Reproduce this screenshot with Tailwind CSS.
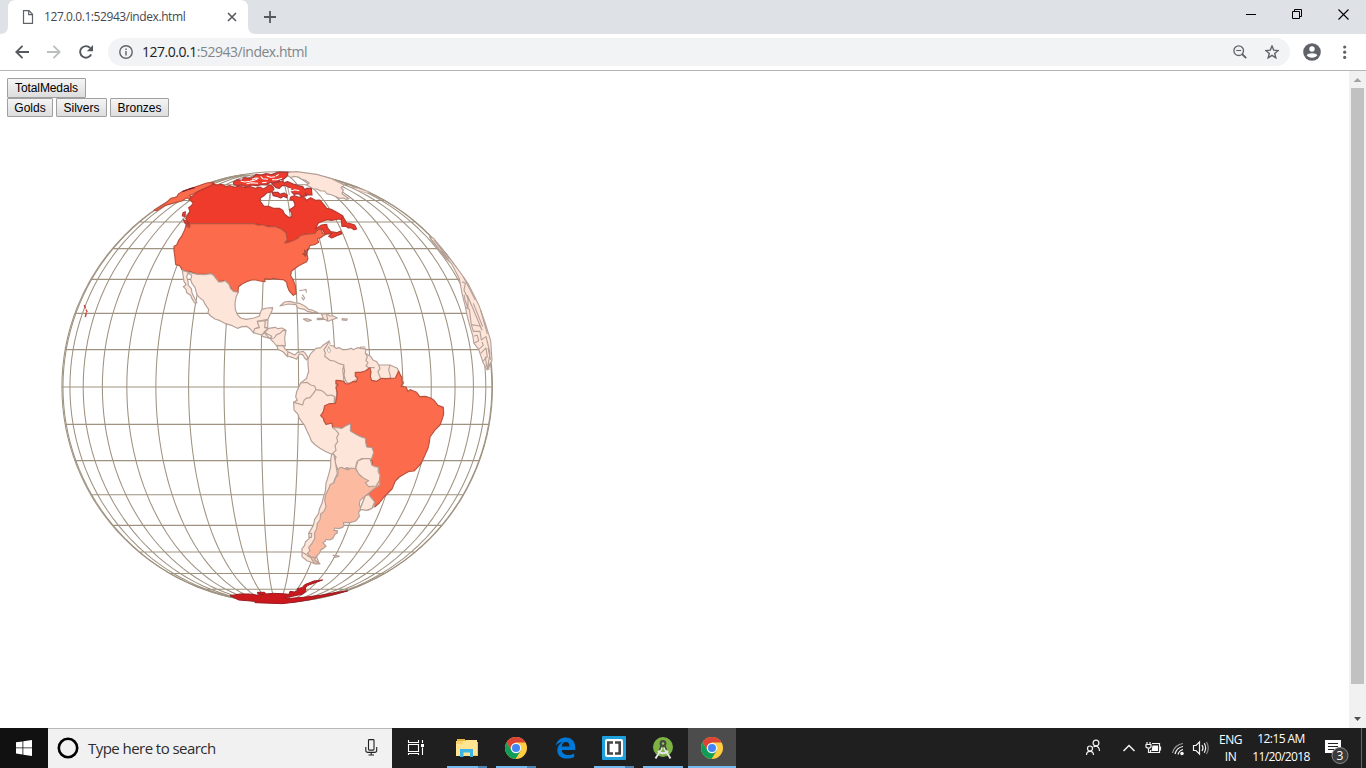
<!DOCTYPE html>
<html lang="en">
<head>
<meta charset="utf-8">
<title>127.0.0.1:52943/index.html</title>
<script src="https://cdn.jsdelivr.net/npm/@tailwindcss/browser@4"></script>
</head>
<body class="w-[1366px] h-[768px] overflow-hidden bg-white flex flex-col font-['Open_Sans',sans-serif]">

<!-- Tab strip -->
<header class="h-[34px] shrink-0 bg-[#dee1e6] flex">
  <svg class="w-[256px] h-[34px] shrink-0 absolute" viewBox="0 0 256 34"><path d="M0 34Q8 34 8 26V8Q8 0 16 0H240Q248 0 248 8V26Q248 34 256 34Z" fill="#fff"/></svg>
  <div class="relative w-[248px] h-[34px] flex items-center">
    <svg class="ml-[22px] w-[12px] h-[14px]" viewBox="0 0 12 14" fill="none" stroke="#5f6368" stroke-width="1.2"><path d="M1.5 .7H7L10.5 4.3V13.3H1.5ZM6.7 .8V4.6H10.4"/></svg>
    <span class="ml-[10px] w-[180px] text-[12px] leading-[16px] tracking-[-0.42px] text-[#45494d] whitespace-nowrap">127.0.0.1:52943/index.html</span>
    <svg class="w-[10px] h-[10px] shrink-0 ml-[3px]" viewBox="0 0 10 10" stroke="#55595e" stroke-width="1.6"><path d="M1 1L9 9M9 1L1 9"/></svg>
  </div>
  <svg class="ml-[16px] mt-[11px] w-[12px] h-[12px]" viewBox="0 0 12 12" stroke="#55595e" stroke-width="1.8"><path d="M6 0V12M0 6H12"/></svg>
  <div class="ml-auto flex mt-[9px] pr-[17px] gap-[36px]">
    <svg class="w-[10px] h-[11px]" viewBox="0 0 10 11" stroke="#000"><path d="M0 5.5H10"/></svg>
    <svg class="w-[10px] h-[11px]" viewBox="0 0 10 11" stroke="#000" fill="none"><path d="M.5 2.5H7.5V9.5H.5ZM2.5 2.5V.5H9.5V7.5H7.5"/></svg>
    <svg class="w-[11px] h-[11px]" viewBox="0 0 11 11" stroke="#000" stroke-width="1.1"><path d="M.5 .5L10.5 10.5M10.5 .5L.5 10.5"/></svg>
  </div>
</header>

<!-- Toolbar -->
<nav class="h-[37px] shrink-0 flex items-center bg-white border-b border-[#b5b5b5]">
  <svg class="ml-[15px] w-[14px] h-[14px]" viewBox="0 0 14 14" fill="none" stroke="#55595e" stroke-width="1.8"><path d="M14 7H1.5M7.5 .8L1.3 7L7.5 13.2"/></svg>
  <svg class="ml-[18px] w-[14px] h-[14px]" viewBox="0 0 14 14" fill="none" stroke="#bbbdbf" stroke-width="1.8"><path d="M0 7H12.5M6.5 .8L12.7 7L6.5 13.2"/></svg>
  <svg class="ml-[18px] w-[14px] h-[14px]" viewBox="0 0 14 14" fill="none"><path d="M12.2 9.4A5.8 5.8 0 1 1 11.2 2.9" stroke="#55595e" stroke-width="1.9"/><path d="M14 0V6.2H7.8Z" fill="#55595e"/></svg>
  <div class="ml-[15px] w-[1182px] h-[28px] rounded-full bg-[#f1f3f4] flex items-center">
    <svg class="ml-[11px] w-[14px] h-[14px]" viewBox="0 0 14 14" fill="none" stroke="#5f6368" stroke-width="1.4"><circle cx="7" cy="7" r="6.2"/><path d="M7 6V10.5M7 3.4V4.9"/></svg>
    <span class="ml-[9px] text-[14px] leading-[20px] tracking-[-0.48px] text-[#80868b] whitespace-nowrap"><span class="text-[#202124]">127.0.0.1</span>:52943/index.html</span>
    <svg class="ml-auto w-[14px] h-[14px]" viewBox="0 0 14 14" fill="none" stroke="#5f6368"><circle cx="5.7" cy="5.7" r="4.8" stroke-width="1.3"/><path d="M3.2 5.5H8.2" stroke-width="1.1"/><path d="M9 9L13.2 13.2" stroke-width="1.8"/></svg>
    <svg class="ml-[18px] mr-[11px] w-[14px] h-[14px]" viewBox="0 0 14 14" fill="none" stroke="#5f6368" stroke-width="1.4"><path d="M7 1L8.700 5.100L13.100 5.500L9.700 8.400L10.800 12.800L7 10.400L3.200 12.800L4.300 8.400L.9 5.500L5.300 5.100Z"/></svg>
  </div>
  <svg class="ml-[13px] w-[18px] h-[18px]" viewBox="0 0 18 18"><circle cx="9" cy="9" r="8.8" fill="#5f6368"/><circle cx="9" cy="6" r="2.7" fill="#fff"/><path d="M3.7 12.3C4.5 9.6 13.5 9.6 14.3 12.3C12.5 15.6 5.5 15.6 3.7 12.3Z" fill="#fff"/></svg>
  <svg class="ml-[22px] w-[4px] h-[14px]" viewBox="0 0 4 14" fill="#5f6368"><circle cx="1.700" cy="2" r="1.600"/><circle cx="1.700" cy="7.200" r="1.600"/><circle cx="1.700" cy="12.400" r="1.600"/></svg>
</nav>

<!-- Page -->
<main class="h-[657px] shrink-0 flex bg-white">
  <div class="grow pl-[7px] pt-[7px]">
    <div class="flex font-['Liberation_Sans',Arial,sans-serif] text-[12px] leading-[18px] text-black">
      <button class="w-[79px] h-[20px] border border-[#a0a0a0] rounded-[1px] bg-linear-to-b from-[#f5f5f5] to-[#dddddd] tracking-[-0.1px]">TotalMedals</button>
    </div>
    <div class="flex gap-[3px] font-['Liberation_Sans',Arial,sans-serif] text-[12px] leading-[16px] text-black">
      <button class="w-[46px] h-[19px] border border-[#a0a0a0] rounded-[1px] bg-linear-to-b from-[#f5f5f5] to-[#dddddd]">Golds</button>
      <button class="w-[51px] h-[19px] border border-[#a0a0a0] rounded-[1px] bg-linear-to-b from-[#f5f5f5] to-[#dddddd]">Silvers</button>
      <button class="w-[59px] h-[19px] border border-[#a0a0a0] rounded-[1px] bg-linear-to-b from-[#f5f5f5] to-[#dddddd]">Bronzes</button>
    </div>
    <svg class="block ml-[50px] mt-[50px] w-[440px] h-[440px]" viewBox="57 167 440 440" fill="none" stroke-linejoin="round">
      <g id="graticule" stroke="#9f9280" stroke-width="1.050"></g>

      <!-- North America -->
      <g transform="translate(150 165) scale(.33333)" stroke="#b5a097" stroke-width="3.500">
        <path fill="#fee5d9" d="M410 22L440 20L500 28L545 41L583 60L573 68L580 75L576 86L597 101L588 103L580 99L568 100L560 96L546 90L530 86L524 78L512 78L500 72L490 72L480 66L470 60L478 54L466 46L454 42L445 36L430 34L424 38L414 32Z"/>
        <path fill="#fee5d9" stroke-width="2" d="M606 66L625 70L660 82L650 84L622 76Z"/>
        <path fill="#fc6b4b" stroke="#b9523f" d="M192 52L170 54L133 67L100 78L86 86L80 96L62 100L50 112L12 136L20 137L44 122L65 116L78 112L96 108L104 102L112 98L120 104L128 98L118 92L140 82L160 72L192 61Z"/>
        <path stroke="#7c1f2c" stroke-width="4" d="M97 80L118 72L134 68"/>
        <path fill="#ef3b2c" stroke="#b63a30" d="M186 56L200 60L215 58L228 65L240 62L252 67L270 63L284 68L300 65L316 70L330 66L340 72L350 66L356 60L368 64L372 72L366 80L350 84L342 92L332 98L330 108L342 124L356 124L370 130L388 130L398 136L404 148L412 154L418 158L426 155L425 144L418 134L426 130L434 124L435 118L430 106L420 104L422 96L434 92L446 97L458 94L470 106L482 98L496 106L510 105L524 122L530 130L546 134L560 142L578 152L581 166L566 162L545 166L532 164L520 168L505 174L496 192L515 180L530 178L532 188L542 200L560 203L572 198L576 206L560 212L552 216L545 219L536 214L546 206L525 207L517 193L500 197L496 205L465 208L444 220L428 227L404 234L412 225L408 203L395 193L378 185L340 182L312 176L116 176L107 160L120 140L116 128L124 122L130 114L118 104L122 98L140 82L160 72L186 60Z"/>
        <path fill="#ef3b2c" stroke="#b63a30" d="M578 154L574 164L576 184L588 184L595 189L604 188L612 194L620 192L614 180L600 176L590 174L584 164Z"/>
        <path fill="#ef3b2c" stroke="#b63a30" d="M100 164L114 170L122 180L119 188L106 176ZM99 143L106 140L105 154L97 153Z"/>
        <path fill="#ef3b2c" stroke="#a6373a" d="M250 52L262 44L275 46L282 38L300 40L310 36L318 28L334 30L348 26L364 29L376 25L388 21L414 22L411 34L398 44L384 42L390 50L374 54L362 52L348 60L336 58L320 62L305 60L290 66L276 60L262 62L252 58ZM366 56L384 50L398 48L402 54L412 50L430 57L444 62L458 65L464 74L470 70L484 70L486 90L474 90L466 84L470 92L455 94L445 86L432 88L424 80L430 76L418 68L408 62L396 62L388 70L378 68ZM366 82L384 82L390 88L402 84L412 91L410 98L400 94L392 99L380 94L370 92Z"/>
        <path stroke="#fff" stroke-width="3.200" d="M272 48L284 51L300 49L322 43M290 56L304 53L324 55M332 34L338 41L354 43M350 33L362 37L376 35M366 44L380 44L396 40M424 78L434 74L448 77M336 53L350 52M306 43L318 39L326 40M386 28L378 33M410 70L424 71"/>
        <path stroke="#b5a097" stroke-width="3" d="M413 66L418 90M362 84L360 104"/>
        <path fill="#fc6b4b" stroke="#b9523f" d="M116 176L312 176L322 180L340 180L354 185L378 185L395 193L408 203L410 214L412 225L404 234L416 232L428 227L444 220L450 212L465 208L496 205L500 197L512 191L518 205L529 208L520 212L512 218L502 222L506 232L496 238L490 240L480 241L475 254L468 258L471 270L474 280L470 290L446 302L430 314L424 320L422 332L430 346L436 362L438 386L430 391L418 378L412 364L410 352L400 344L385 343L372 340L358 343L344 341L345 350L330 348L318 345L305 345L290 350L276 357L265 366L264 382L248 378L237 358L225 347L212 348L206 352L198 346L196 338L184 325L164 328L142 327L120 320L97 316L90 303L77 298L75 278L72 258L72 244L80 240L86 226L94 215L104 195L108 181L118 188L120 182Z"/>
        <path stroke="#9c4437" stroke-width="3.500" d="M464 254L466 275M457 265L467 272M473 251L470 271M109 174L120 178"/>
      </g>

      <!-- Mexico, Central America and the Caribbean -->
      <g transform="translate(160 260) scale(.33333)" stroke="#b5a097" stroke-width="3.500">
        <path fill="#fee5d9" d="M67 31L90 38L112 43L134 44L154 41L162 47L166 53L176 66L186 66L195 62L207 73L212 86L220 94L235 97L228 112L225 130L226 148L232 164L242 174L258 178L282 174L298 168L302 156L305 148L322 144L338 143L336 152L330 164L324 178L292 184L298 203L290 204L280 218L270 206L260 199L246 200L232 205L214 196L197 191L180 182L165 177L152 168L144 159L146 148L136 134L130 122L118 112L112 106L108 94L105 82L96 70L92 60L95 46L84 40L80 50L84 64L85 76L94 86L96 98L102 112L111 128L104 129L96 116L92 106L80 98L78 88L70 80L78 74L72 64L70 52Z"/>
        <path fill="#fee5d9" d="M292 184L316 182L314 203L326 205L312 220L304 225L280 218L284 206L298 203ZM316 182L324 180L323 202L314 203ZM304 225L312 218L330 235L308 229ZM312 216L326 205L345 202L354 206L366 204L378 211L374 234L376 258L366 256L350 258L340 246L330 236L335 229ZM330 236L342 234L350 224L360 220L368 212L378 211M350 256L370 258L376 268L384 275L382 290L370 276L354 268ZM384 275L394 280L404 285L412 278L420 276L430 274L436 280L444 292L440 300L434 294L428 284L418 282L414 290L410 298L396 292L382 288Z"/>
        <path fill="#fee5d9" d="M360 138L374 126L390 124L402 128L418 130L434 138L446 148L456 150L474 158L458 158L442 154L432 148L414 144L408 134L385 132ZM484 161L502 162L510 168L520 168L532 174L516 179L504 184L494 178L472 179L472 175L490 175ZM500 164L503 182M430 177L442 176L454 181L441 184ZM547 176L562 177L560 181L546 180Z"/>
        <path d="M418 92L430 90L438 88L439 98M427 104L434 114L430 120L425 111"/>
      </g>

      <!-- South America -->
      <g transform="translate(280 335) scale(.33333)" stroke="#b5a097" stroke-width="3.500">
        <path fill="#fee5d9" d="M84 72L92 56L108 40L122 38L130 30L148 18L150 26L146 30L160 33L168 40L178 38L188 44L200 44L214 40L220 44L232 38L258 42L256 54L264 60L272 64L278 74L290 80L296 90L330 90L352 100L370 145L300 220L240 400L165 400L155 358L138 350L120 340L106 330L94 318L88 302L82 290L74 272L58 250L54 238L42 225L41 202L52 196L50 178L62 144L80 130L82 120L86 110L84 90Z"/>
        <path fill="#fee5d9" d="M62 144L82 142L92 150L104 153L108 164L98 178L90 188L78 190L72 196L68 210L52 205L41 202L52 196L47 186L50 170ZM108 164L122 166L130 170L142 182L156 180L164 186L162 204M164 202L170 180L168 138L180 138L192 144L190 120L188 104L192 90L178 86L162 78L150 76L134 64L136 54L132 44L140 32L148 18M190 88L194 108L192 120L196 134L200 142L210 146L228 134M256 54L262 66L258 76L264 84L258 92L266 98M272 112L270 98L284 98M296 90L300 100L294 110L302 132M330 90L326 104L330 118L332 132M258 42L240 40L242 36L256 36"/>
        <path fill="#fff" stroke-width="2.500" d="M146 35L152 48L148 53L142 48Z"/>
        <path fill="#fc6b4b" stroke="#b9523f" d="M168 136L180 137L192 140L196 146L206 147L218 140L230 140L232 128L226 124L226 112L242 112L256 108L269 98L273 110L271 124L275 136L290 139L304 130L318 131L346 129L356 108L360 118L366 128L365 138L370 142L363 154L378 156L384 170L390 164L410 172L419 185L436 184L452 189L462 196L474 211L490 217L491 238L486 254L480 270L464 286L450 306L448 322L444 340L434 362L424 384L412 398L402 408L388 409L374 416L358 426L346 438L336 462L312 486L298 504L284 516L274 496L258 482L280 462L297 450L297 438L294 426L298 416L296 402L286 403L275 398L277 382L273 372L276 362L281 350L276 338L260 336L257 322L257 310L244 306L230 299L211 288L212 266L198 272L186 280L172 278L158 278L156 264L138 268L132 258L130 250L122 242L130 230L134 212L148 206L166 205L170 190L172 174L168 158L174 148L168 146Z"/>
        <path fill="#fee5d9" d="M158 278L172 278L186 280L198 272L212 266L211 288L230 299L244 306L257 310L257 322L260 336L276 338L281 352L274 373L244 371L230 384L226 402L214 402L200 398L188 404L174 404L168 390L164 378L168 366L158 355L168 346L165 332L173 320L170 308L176 296L168 286ZM230 382L244 371L270 373L275 398L297 404L299 440L290 452L268 454L264 442L228 406ZM256 482L268 486L276 492L280 500L283 514L266 525L240 521Z"/>
      </g>
      <!-- Southern cone, Falklands and Antarctica -->
      <g transform="translate(220 450) scale(.33333)" stroke="#b5a097" stroke-width="3.500">
        <path fill="#fee5d9" d="M335 12L332 30L332 50L326 74L318 100L316 124L310 142L306 160L298 178L296 190L284 208L280 226L273 238L266 250L268 265L256 276L254 286L246 296L246 320L262 333L272 336L285 342L298 342L290 322L296 290L306 240L320 170L328 130L352 70L342 14Z"/>
        <path fill="#fcbba1" d="M354 60L358 54L364 52L374 56L384 60L392 54L407 56L412 64L420 68L436 82L448 93L444 102L460 107L478 94L480 104L460 118L438 136L428 144L420 152L418 164L424 178L416 186L418 200L407 213L390 218L370 218L372 226L368 232L356 236L344 234L342 242L352 242L352 248L344 254L338 266L328 270L318 268L316 274L308 278L318 288L310 296L304 298L298 310L288 320L284 330L300 341L282 339L272 322L262 310L270 302L266 292L276 280L284 266L284 248L290 236L292 220L300 210L302 192L312 184L318 170L314 150L318 132L328 112L330 104L342 98L346 84L354 76Z"/>
        <path fill="#fee5d9" d="M407 54L414 32L430 26L450 26L456 46L466 50L476 52L474 64L480 76L478 92L468 108L446 110L436 98L446 92L430 84L416 72ZM436 137L446 134L464 156L456 175L440 181L420 178Z"/>
        <path d="M266 250L275 250L274 262L266 262M246 306L256 312L266 320L282 322L286 326M338 316L350 317L358 319L340 323"/>
        <path fill="#cb181d" stroke="#9b1c22" stroke-width="3" d="M30 437L60 432L88 432L110 435L130 434L114 432L112 427L134 427L138 432L160 430L186 431L207 433L210 424L224 426L232 422L232 416L246 413L254 404L282 393L308 390L294 395L264 406L256 414L258 424L248 432L222 438L194 443L212 445L250 442L300 436L350 427L383 423L340 434L270 449L230 456L186 461L105 458L104 454L56 450Z"/>
      </g>

      <!-- Western Africa and Iberia along the limb -->
      <g transform="translate(400 220) scale(.33333)" stroke="#b5a097" stroke-width="3.300">
        <path fill="#fee5d9" d="M88 50L100 54L126 88L156 124L180 156L206 194L236 254L256 310L272 362L276 420L262 450L250 430L236 388L222 370L218 346L210 320L202 290L196 260L186 220L178 176L154 130L134 112L108 80Z"/>
        <path d="M102 60L142 112M92 56L116 86L146 118M120 94L150 126M186 185L196 190L192 210L204 236L204 264L195 240L192 224M196 262L208 268L214 314L240 318L246 330L202 226M220 250L248 320M242 270L262 342M190 170L226 240M214 314L220 334L240 334L244 360L258 350L262 366M222 348L232 346L236 362L222 370M236 388L250 376L246 366M242 400L258 384L262 410L248 424M262 366L270 400L262 446M264 384L272 420M268 430L266 450M256 410L260 440"/>
      </g>

      <!-- Hawaii -->
      <path stroke="#c94b3c" stroke-width="1.500" d="M84.300 305L85.500 308.500M86 309.500L87.200 312M86.500 312.500L85.300 317"/>
    </svg>
  </div>
  <!-- Scrollbar -->
  <div class="w-[17px] bg-[#f1f1f1] flex flex-col items-center">
    <svg class="h-[17px] w-[17px]" viewBox="0 0 17 17" fill="#a3a3a3"><path d="M4.5 11L8.5 7L12.5 11Z"/></svg>
    <div class="w-[13px] h-[596px] bg-[#c1c1c1]"></div>
    <svg class="mt-auto h-[17px] w-[17px]" viewBox="0 0 17 17" fill="#505050"><path d="M5 6H12L8.5 10Z"/></svg>
  </div>
</main>

<!-- Taskbar -->
<footer class="h-[40px] shrink-0 bg-[#1f1f1f] flex">
  <div class="w-[48px] bg-[#111] flex items-center justify-center">
    <svg class="w-[16px] h-[16px]" viewBox="0 0 16 16" fill="#fff"><path d="M0 2.3L6.5 1.4V7.5H0ZM7.3 1.3L16 0V7.5H7.3ZM0 8.3H6.5V14.5L0 13.6ZM7.3 8.3H16V16L7.3 14.7Z"/></svg>
  </div>
  <div class="w-[344px] bg-[#f1f1f1] border-t border-[#b8b8b8] flex items-center">
    <svg class="ml-[9px] mb-[2px] w-[22px] h-[22px]" viewBox="0 0 22 22"><circle cx="11" cy="11" r="9.2" fill="none" stroke="#000" stroke-width="2.6"/></svg>
    <span class="ml-[9px] mb-[2px] text-[15px] leading-[20px] tracking-[-0.55px] text-[#2d2d2d] whitespace-nowrap">Type here to search</span>
    <svg class="ml-auto mr-[14px] mb-[2px] w-[13px] h-[17px]" viewBox="0 0 13 17" fill="none" stroke="#222" stroke-width="1.1"><rect x="3.5" y=".6" width="5.500" height="10.5" rx=".8"/><path d="M.8 8V11.5Q.8 13.4 3 13.4H9.500Q11.700 13.4 11.700 11.5V8M6.200 13.4V16M3.500 16H9"/></svg>
  </div>
  <svg class="w-[348px] h-[40px]" viewBox="392 728 348 40">
    <rect x="688" y="728" width="48" height="40" fill="#4c4c4c"/>
    <g fill="#76b9ed"><path d="M447 766H478V768H447ZM496 766H527V768H496ZM594 766H625V768H594ZM643 766H683V768H643ZM688 766H736V768H688Z"/></g>
    <path fill="#4d84b4" d="M478 766H487V768H478ZM527 766H536V768H527ZM625 766H634V768H625Z"/>
    <g fill="none" stroke="#fff" stroke-width="1.1"><path d="M408.5 744.5H418.5V751.5H408.5ZM408.5 740V742.5H418.5V740M408.5 755V753.5H418.5V755M422.5 740V743M422.5 747.5V755"/></g><path fill="#fff" d="M421 744H424V747H421Z"/>
    <!-- File Explorer -->
    <path fill="#e8b63e" d="M457 739H465V743H457Z"/><path fill="#ffe591" d="M456 741H464L466 740H477V756H456Z"/><path fill="#f7d470" d="M456 741H463V744H456Z"/><path fill="#3db4e5" d="M460 749H473V757H470V752.5H463.5V757H460Z"/><path fill="#f5c54c" d="M477 742H478V756H473V755H477Z"/>
    <!-- Chrome -->
    <defs><g id="chrome"><circle r="11" fill="#ffcd41"/><path fill="#db4437" d="M-9.53 -5.5A11 11 0 0 1 9.53 -5.5L0 -5.5L-4.3 2.5Z"/><path fill="#0f9d58" d="M-9.53 -5.5A11 11 0 0 0 -.5 11L4.8 2.5L-4.3 2.5Z"/><circle r="5.3" fill="#f4f4f4"/><circle r="4" fill="#4285f4"/></g></defs>
    <use href="#chrome" x="516" y="748"/><use href="#chrome" x="712" y="748"/>
    <!-- Edge -->
    <path fill="#0078d7" d="M555.5 746C557 740 561 737.5 566 737.5C572 737.5 575.2 742 575.2 747V750H561.7C562 754 565.5 755 568.5 755C571 755 573 754.2 574.2 753.4V757C572 758.2 569.5 758.6 567 758.6C560 758.6 557.3 754.5 557.3 750C557.3 746.5 559.5 743.6 562.5 742.3C559.5 742.3 557 743.7 555.5 746ZM561.8 746.5H569.5C569.5 744 568.5 742 566 742C563.5 742 562 744 561.8 746.5Z"/>
    <!-- Brackets -->
    <rect x="602" y="736" width="24" height="24" rx="1" fill="#1fa0de"/><rect x="605" y="739" width="18" height="18" rx="2" fill="#fff"/><path fill="none" stroke="#444" stroke-width="2.6" d="M613 742.5H608.3V753.5H613M615 742.5H619.7V753.5H615"/><path fill="#fff" d="M611 745H617V751H611Z"/>
    <!-- Android Studio -->
    <circle cx="663" cy="747" r="10" fill="#7db343"/><circle cx="663" cy="743.500" r="3.4" fill="#454a41"/><circle cx="663" cy="743.500" r="1.2" fill="#9bc46a"/><path fill="none" stroke="#e6e6e6" stroke-width="1.900" d="M662 748L655.5 758.5M664 748L670.5 758.5M658 751C660 754 666 754 668 751"/><path stroke="#454a41" stroke-width="1.5" d="M661 746L659.5 750M665 746L666.5 750"/>
  </svg>
  <svg class="ml-auto w-[132px] h-[40px]" viewBox="1080 728 132 40" fill="none" stroke="#f2f2f2" stroke-width="1.2">
    <circle cx="1096" cy="743" r="2.9"/><circle cx="1090" cy="748.500" r="2.5"/><path d="M1086.500 755Q1086.500 751.300 1090 751.300Q1093.500 751.300 1093.500 755M1093.5 747Q1096 745 1098.5 747.500Q1099.5 749 1099.5 751"/>
    <path d="M1123.5 751L1129 745.5L1134.5 751" stroke-width="1.5"/>
    <path d="M1152 743.5H1159.500V752.5H1150.500V750M1160.500 746.5V750.5M1147 742V744M1150 742V744M1145.5 744.5H1151.5M1146 745V747Q1148.5 749.5 1151 747V745M1148.5 749V752.5H1151"/><path d="M1152.500 745.500H1158V751H1151.500Z" fill="#fff" stroke="none"/>
    <path stroke="#999" d="M1172.5 753A12 12 0 0 1 1183 743.5"/><path d="M1175 754A10 10 0 0 1 1183 746.5M1178 754.5A7 7 0 0 1 1183 749.5"/><circle cx="1182" cy="753.5" r="1.2" fill="#fff"/>
    <path d="M1193.5 745.5H1196L1199.5 742V754L1196 750.5H1193.5ZM1202 745Q1204 748 1202 751M1204.3 743.3Q1207 748 1204.3 752.7"/><path stroke="#888" d="M1206.5 742Q1210 748 1206.5 754"/>
  </svg>
  <div class="w-[37px] flex flex-col items-center pt-[3px] text-white text-[12px] leading-[17px] tracking-[-0.5px]"><span>ENG</span><span>IN</span></div>
  <div class="w-[64px] flex flex-col items-center pt-[2px] text-white text-[12px] leading-[18px] tracking-[-0.6px] whitespace-nowrap"><span>12:15 AM</span><span>11/20/2018</span></div>
  <svg class="w-[53px] h-[40px]" viewBox="1313 728 53 40"><path fill="#fff" d="M1325 740H1341V753H1335L1332 756V753H1325Z"/><path stroke="#222" stroke-width="1.2" d="M1328 743.5H1338M1328 746.5H1338M1328 749.5H1334"/><circle cx="1340" cy="755.5" r="8" fill="#3b3b3b" stroke="#8b8b8b"/><text x="1340" y="760" text-anchor="middle" font-size="12" fill="#fff">3</text><path stroke="#666" d="M1361.5 728V768"/></svg>
</footer>

<script>
// Orthographic graticule, one line every 10 degrees.
const cx = 277.2, cy = 387, r = 215.3, lon0 = -85.7, rad = Math.PI / 180;
const point = (lon, lat) => {
  const l = (lon - lon0) * rad, p = lat * rad;
  return (cx + r * Math.cos(p) * Math.sin(l)).toFixed(2) + ' ' + (cy - r * Math.sin(p)).toFixed(2);
};
let d = '';
for (let lon = -170; lon <= 0; lon += 10) {
  const top = lon % 90 === 0 ? 90 : 80;
  for (let lat = -top; lat <= top; lat += 2.5) d += (lat === -top ? 'M' : 'L') + point(lon, lat);
}
for (let lat = -80; lat <= 80; lat += 10) d += 'M' + point(lon0 - 90, lat) + 'L' + point(lon0 + 90, lat);
const ns = 'http://www.w3.org/2000/svg', g = document.getElementById('graticule');
const lines = document.createElementNS(ns, 'path');
lines.setAttribute('d', d);
const rim = document.createElementNS(ns, 'circle');
rim.setAttribute('cx', cx); rim.setAttribute('cy', cy); rim.setAttribute('r', r);
g.append(lines, rim);
</script>
</body>
</html>
